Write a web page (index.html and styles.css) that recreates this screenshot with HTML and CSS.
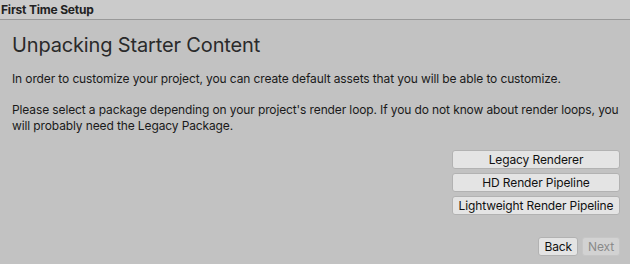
FILE: index.html
```html
<!DOCTYPE html>
<html>
<head>
<meta charset="utf-8">
<link rel="stylesheet" href="styles.css">
</head>
<body>
<div class="window">
  <div class="titlebar">First Time Setup</div>
  <div class="content">
    <h1 class="heading">Unpacking Starter Content</h1>
    <p class="text">In order to customize your project, you can create default assets that you will be able to customize.</p>
    <p class="text">Please select a package depending on your project's render loop. If you do not know about render loops, you will probably need the Legacy Package.</p>
    <div class="choices">
      <button class="btn choice">Legacy Renderer</button>
      <button class="btn choice">HD Render Pipeline</button>
      <button class="btn choice">Lightweight Render Pipeline</button>
    </div>
    <div class="nav">
      <button class="btn navbtn">Back</button>
      <button class="btn navbtn disabled">Next</button>
    </div>
  </div>
</div>
</body>
</html>
```
FILE: styles.css
```css
html, body {
  margin: 0;
  padding: 0;
  width: 630px;
  height: 264px;
  overflow: hidden;
  background: #c2c2c2;
  font-family: Inter, "Noto Sans", sans-serif;
  color: #111;
}
.window {
  display: flex;
  flex-direction: column;
  height: 264px;
}
.titlebar {
  height: 20px;
  box-sizing: border-box;
  background: #cbcbcb;
  border-bottom: 1px solid #999;
  font-size: 12px;
  font-weight: 700;
  line-height: 20px;
  padding-left: 1px;
  color: #222;
  letter-spacing: -0.2px;
}
.content {
  flex: 1;
  display: flex;
  flex-direction: column;
  padding: 0 10px 8px 12px;
}
.heading {
  margin: 12px 0 0 0;
  font-size: 20px;
  font-weight: 400;
  line-height: 26px;
  color: #2a2a2a;
  letter-spacing: -0.15px;
}
.text {
  margin: 13px 0 0 0;
  font-size: 12px;
  line-height: 16px;
  color: #1a1a1a;
  letter-spacing: -0.12px;
}
.text + .text {
  margin-top: 15px;
}
.choices {
  display: flex;
  flex-direction: column;
  align-items: flex-end;
  gap: 4px;
  margin-top: 16px;
}
.btn {
  font-family: Inter, "Noto Sans", sans-serif;
  font-size: 12px;
  height: 19px;
  line-height: 17px;
  padding: 0 4px;
  background: #e4e4e4;
  border: 1px solid #b2b2b2;
  border-radius: 3px;
  color: #111;
  box-sizing: border-box;
  white-space: nowrap;
  letter-spacing: -0.12px;
}
.choice {
  width: 168px;
  padding: 0 2px;
}
.navbtn {
  padding: 0 5px;
}
.nav {
  margin-top: auto;
  display: flex;
  justify-content: flex-end;
  gap: 4px;
}
.disabled {
  background: #d2d2d2;
  color: #8a8a8a;
  border-color: #c6c6c6;
}
```
